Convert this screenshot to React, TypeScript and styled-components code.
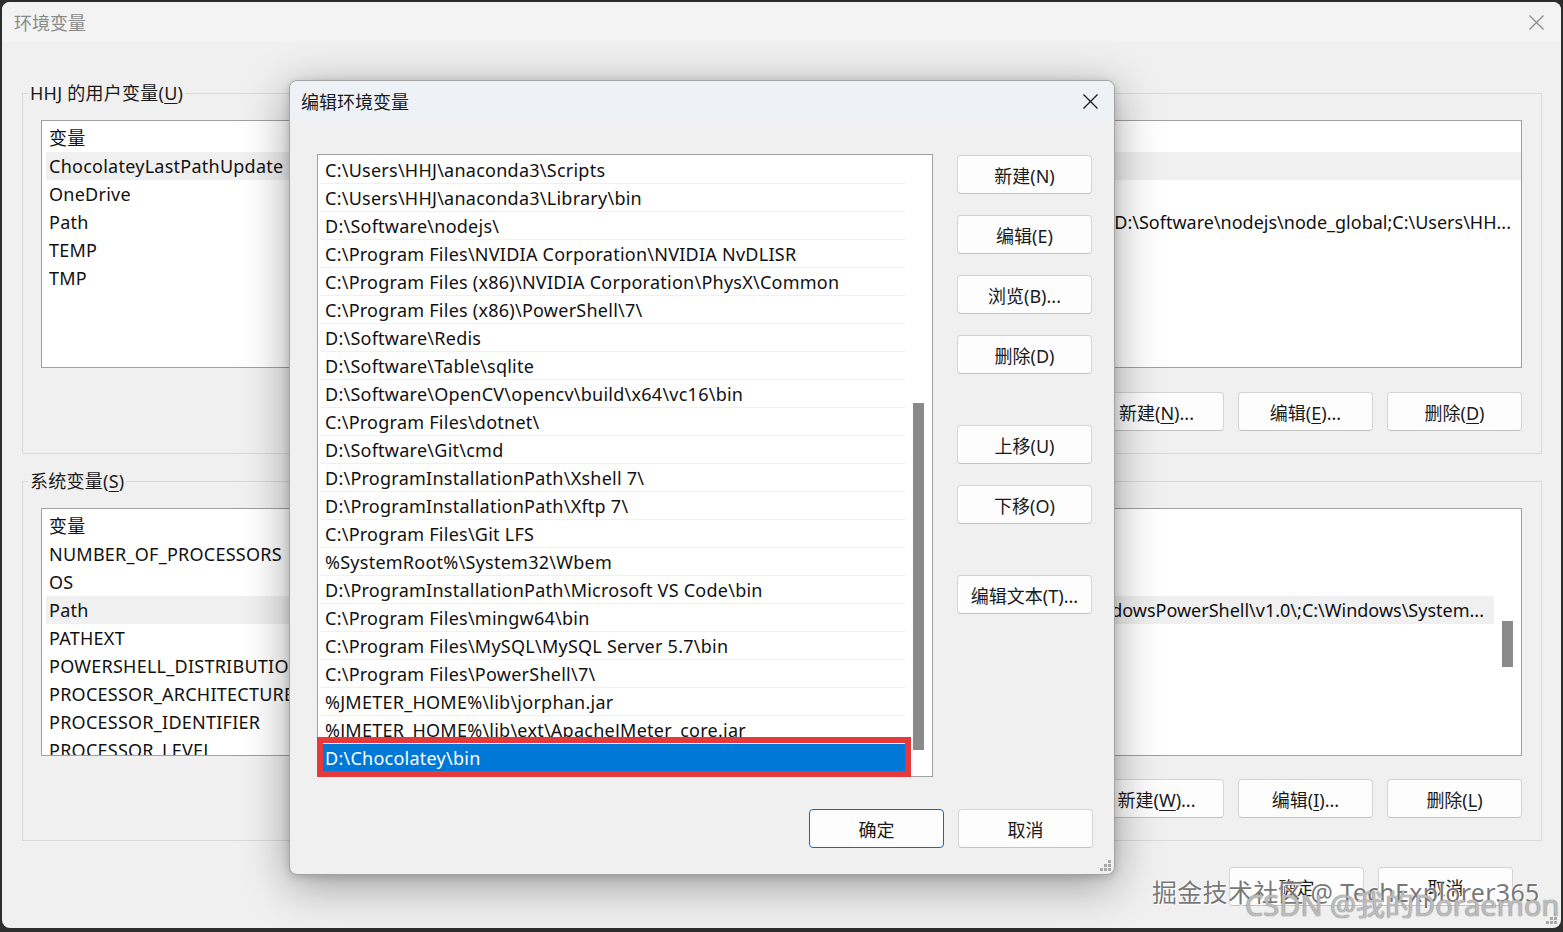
import React from 'react'
import styled, { createGlobalStyle } from 'styled-components'

const GlobalStyle = createGlobalStyle`
  * { box-sizing: border-box; }
  html, body { margin: 0; padding: 0; }
  body {
    background: #2d2d2d;
    font-family: "Noto Sans", "Noto Sans CJK SC", sans-serif;
    font-size: 18px;
    letter-spacing: 0.25px;
    color: #000;
    overflow: hidden;
  }
`

type Variable = { name: string; value: string; hover?: boolean; tail?: boolean }

const userVars: Variable[] = [
  { name: 'ChocolateyLastPathUpdate', value: '133530264858426381', hover: true },
  { name: 'OneDrive', value: 'C:\\Users\\HHJ\\OneDrive' },
  {
    name: 'Path',
    value:
      'C:\\Users\\HHJ\\AppData\\Local\\Microsoft\\WindowsApps;C:\\Users\\HHJ\\AppData\\Local\\Programs\\Microsoft VS Code\\bin;D:\\Software\\nodejs\\node_global;C:\\Users\\HH...',
    tail: true,
  },
  { name: 'TEMP', value: '%USERPROFILE%\\AppData\\Local\\Temp' },
  { name: 'TMP', value: '%USERPROFILE%\\AppData\\Local\\Temp' },
]

const systemVars: Variable[] = [
  { name: 'NUMBER_OF_PROCESSORS', value: '16' },
  { name: 'OS', value: 'Windows_NT' },
  {
    name: 'Path',
    value:
      'C:\\Windows\\system32;C:\\Windows;C:\\Windows\\System32\\Wbem;C:\\Windows\\System32\\WindowsPowerShell\\v1.0\\;C:\\Windows\\System...',
    hover: true,
    tail: true,
  },
  { name: 'PATHEXT', value: '.COM;.EXE;.BAT;.CMD;.VBS;.VBE;.JS;.JSE;.WSF;.WSH;.MSC' },
  { name: 'POWERSHELL_DISTRIBUTION_CHANNEL', value: 'MSI:Windows 10 Pro' },
  { name: 'PROCESSOR_ARCHITECTURE', value: 'AMD64' },
  { name: 'PROCESSOR_IDENTIFIER', value: 'Intel64 Family 6 Model 154 Stepping 3, GenuineIntel' },
  { name: 'PROCESSOR_LEVEL', value: '6' },
]

const paths = [
  'C:\\Users\\HHJ\\anaconda3\\Scripts',
  'C:\\Users\\HHJ\\anaconda3\\Library\\bin',
  'D:\\Software\\nodejs\\',
  'C:\\Program Files\\NVIDIA Corporation\\NVIDIA NvDLISR',
  'C:\\Program Files (x86)\\NVIDIA Corporation\\PhysX\\Common',
  'C:\\Program Files (x86)\\PowerShell\\7\\',
  'D:\\Software\\Redis',
  'D:\\Software\\Table\\sqlite',
  'D:\\Software\\OpenCV\\opencv\\build\\x64\\vc16\\bin',
  'C:\\Program Files\\dotnet\\',
  'D:\\Software\\Git\\cmd',
  'D:\\ProgramInstallationPath\\Xshell 7\\',
  'D:\\ProgramInstallationPath\\Xftp 7\\',
  'C:\\Program Files\\Git LFS',
  '%SystemRoot%\\System32\\Wbem',
  'D:\\ProgramInstallationPath\\Microsoft VS Code\\bin',
  'C:\\Program Files\\mingw64\\bin',
  'C:\\Program Files\\MySQL\\MySQL Server 5.7\\bin',
  'C:\\Program Files\\PowerShell\\7\\',
  '%JMETER_HOME%\\lib\\jorphan.jar',
  '%JMETER_HOME%\\lib\\ext\\ApacheJMeter_core.jar',
  'D:\\Chocolatey\\bin',
]
const selectedPath = paths.length - 1

/** icons */
const CloseIcon = ({ color }: { color: string }) => (
  <svg width="15" height="15" viewBox="0 0 15 15">
    <path d="M0.5 0.5L14.5 14.5M14.5 0.5L0.5 14.5" stroke={color} strokeWidth="1.3" fill="none" />
  </svg>
)

const GripIcon = () => (
  <svg width="11" height="11" viewBox="0 0 11 11">
    {[
      [8, 0],
      [8, 4],
      [4, 4],
      [8, 8],
      [4, 8],
      [0, 8],
    ].map(([x, y]) => (
      <rect key={`${x}-${y}`} x={x} y={y} width="3" height="3" fill="#a8a8a8" />
    ))}
  </svg>
)

const Screen = styled.div`
  position: relative;
  width: 1563px;
  height: 932px;
  padding: 2px 2px 4px 2px;
`

const Window = styled.div`
  position: relative;
  height: 100%;
  display: flex;
  flex-direction: column;
  background: #f0f0f0;
  border-radius: 8px;
`

const TitleBar = styled.div<{ $tint: string }>`
  height: 40px;
  flex: none;
  display: flex;
  align-items: center;
  justify-content: space-between;
  padding-left: ${(p) => (p.$tint === 'dialog' ? 11 : 12)}px;
  background: ${(p) => (p.$tint === 'dialog' ? '#eef2f6' : '#f3f3f3')};
  border-radius: 8px 8px 0 0;
`

const Title = styled.span<{ $inactive?: boolean }>`
  font-size: 18px;
  letter-spacing: 0;
  color: ${(p) => (p.$inactive ? '#8a8a8a' : '#1a1a1a')};
`

const CloseButton = styled.div<{ $width: number }>`
  width: ${(p) => p.$width}px;
  height: 40px;
  display: flex;
  align-items: center;
  justify-content: center;
`

const Content = styled.div`
  flex: 1;
  display: flex;
  flex-direction: column;
  padding: 0 19px 0 20px;
`

const Group = styled.fieldset<{ $gap: number }>`
  margin: ${(p) => p.$gap}px 0 0;
  padding: 0;
  border: 1px solid #d9d9d9;
  min-inline-size: 0;
`

const Legend = styled.legend`
  margin-left: 5px;
  padding: 0 2px;
  line-height: 24px;
  color: #1a1a1a;
`

const GroupBody = styled.div`
  display: flex;
  flex-direction: column;
  padding: 15px 19px 22px 18px;
`

const Key = styled.span`
  text-decoration: underline;
  text-decoration-thickness: 1px;
  text-underline-offset: 3px;
`

const ListBox = styled.div`
  height: 248px;
  display: flex;
  background: #fff;
  border: 1px solid #a0a0a0;
  overflow: hidden;
`

const ListColumn = styled.div`
  flex: 1;
  min-width: 0;
  display: flex;
  flex-direction: column;
  padding-left: 4px;
`

const ListRow = styled.div<{ $header?: boolean; $hover?: boolean }>`
  flex: none;
  display: flex;
  align-items: center;
  height: ${(p) => (p.$header ? 31 : 28)}px;
  background: ${(p) => (p.$hover ? '#f0f0f0' : 'transparent')};
  color: #111;
`

const NameCell = styled.div`
  width: 262px;
  flex: none;
  padding-left: 3px;
  white-space: nowrap;
  overflow: hidden;
  text-overflow: ellipsis;
`

const ValueCell = styled.div<{ $tail?: boolean }>`
  flex: 1;
  min-width: 0;
  display: flex;
  justify-content: ${(p) => (p.$tail ? 'flex-end' : 'flex-start')};
  padding: 0 10px 0 8px;
  overflow: hidden;
  white-space: nowrap;
  letter-spacing: 0;

  span {
    flex: none;
  }
`

const ScrollTrack = styled.div`
  width: 27px;
  flex: none;
  display: flex;
  align-items: flex-start;
  padding-left: 8px;
  background: #fff;
`

const ScrollThumb = styled.div<{ $offset: number; $size: number }>`
  width: 11px;
  height: ${(p) => p.$size}px;
  margin-top: ${(p) => p.$offset}px;
  background: #8a8a8a;
`

const ButtonRow = styled.div<{ $top: number; $right?: number }>`
  display: flex;
  justify-content: flex-end;
  gap: 14px;
  margin-top: ${(p) => p.$top}px;
  padding-right: ${(p) => p.$right ?? 0}px;
`

const Button = styled.button<{ $primary?: boolean; $push?: boolean }>`
  width: 135px;
  height: 39px;
  flex: none;
  display: flex;
  align-items: center;
  justify-content: center;
  margin-top: ${(p) => (p.$push ? 30 : 0)}px;
  padding: 0;
  font: inherit;
  font-size: 18px;
  letter-spacing: 0;
  color: #1a1a1a;
  background: #fdfdfd;
  border: 1px solid ${(p) => (p.$primary ? '#0f6cbd' : '#d4d4d4')};
  border-bottom-color: ${(p) => (p.$primary ? '#0f6cbd' : '#c2c2c2')};
  border-radius: 4px;
`

const Dialog = styled.div`
  position: absolute;
  left: 287px;
  top: 78px;
  width: 826px;
  height: 795px;
  display: flex;
  flex-direction: column;
  background: #f0f0f0;
  border: 1px solid #a3a3a3;
  border-radius: 8px;
  box-shadow: 0 10px 46px rgba(0, 0, 0, 0.36), 0 2px 8px rgba(0, 0, 0, 0.16);
`

const DialogBody = styled.div`
  display: flex;
  padding: 33px 0 0 27px;
`

const PathList = styled.div`
  position: relative;
  width: 616px;
  height: 623px;
  flex: none;
  display: flex;
  background: #fff;
  border: 1px solid #a0a0a0;
`

const PathRows = styled.div`
  flex: 1;
  min-width: 0;
  display: flex;
  flex-direction: column;
  padding: 1px 0 0 2px;
  overflow: hidden;
`

const PathRow = styled.div<{ $selected?: boolean }>`
  flex: none;
  height: 28px;
  line-height: 27px;
  padding: 1px 0 0 5px;
  white-space: nowrap;
  border-bottom: 1px solid ${(p) => (p.$selected ? '#0078d7' : '#f0f0f0')};
  background: ${(p) => (p.$selected ? '#0078d7' : 'transparent')};
  color: ${(p) => (p.$selected ? '#fff' : '#111')};
`

const Annotation = styled.div`
  position: absolute;
  left: -1px;
  top: 582px;
  width: 594px;
  height: 40px;
  border: 6px solid #e5393b;
  pointer-events: none;
`

const SideButtons = styled.div`
  display: flex;
  flex-direction: column;
  gap: 21px;
  margin-left: 24px;
  padding-top: 1px;
`

const Grip = styled.div<{ $inset: number }>`
  position: absolute;
  right: ${(p) => p.$inset}px;
  bottom: ${(p) => p.$inset}px;
  display: flex;
`

const Watermark = styled.div<{ $kind: 'juejin' | 'csdn' }>`
  position: absolute;
  white-space: nowrap;
  pointer-events: none;
  letter-spacing: ${(p) => (p.$kind === 'juejin' ? 0.3 : 0)}px;
  left: ${(p) => (p.$kind === 'juejin' ? 1152 : 1245)}px;
  top: ${(p) => (p.$kind === 'juejin' ? 876 : 886)}px;
  font-size: ${(p) => (p.$kind === 'juejin' ? 25 : 29)}px;
  line-height: ${(p) => (p.$kind === 'juejin' ? 32 : 38)}px;
  color: ${(p) => (p.$kind === 'juejin' ? 'rgba(95, 95, 95, 0.85)' : 'rgba(255, 255, 255, 0.55)')};
  text-shadow: ${(p) =>
    p.$kind === 'juejin'
      ? '0 0 2px #fff, 0 0 2px #fff, 1px 1px 1px #fff'
      : '0 0 1px rgba(110,110,110,0.9), 0 0 1px rgba(110,110,110,0.9)'};
`

const VariableList = ({ vars, scroll }: { vars: Variable[]; scroll?: { offset: number; size: number } }) => (
  <ListBox>
    <ListColumn>
      <ListRow $header>
        <NameCell>变量</NameCell>
        <ValueCell>
          <span>值</span>
        </ValueCell>
      </ListRow>
      {vars.map((v) => (
        <ListRow key={v.name} $hover={v.hover}>
          <NameCell>{v.name}</NameCell>
          <ValueCell $tail={v.tail}>
            <span>{v.value}</span>
          </ValueCell>
        </ListRow>
      ))}
    </ListColumn>
    {scroll && (
      <ScrollTrack>
        <ScrollThumb $offset={scroll.offset} $size={scroll.size} />
      </ScrollTrack>
    )}
  </ListBox>
)

const keyLabel = (pre: string, key: string, post: string) => (
  <span>
    {pre}
    <Key>{key}</Key>
    {post}
  </span>
)

const EditDialog = () => (
  <Dialog>
    <TitleBar $tint="dialog">
      <Title>编辑环境变量</Title>
      <CloseButton $width={48}>
        <CloseIcon color="#1a1a1a" />
      </CloseButton>
    </TitleBar>
    <DialogBody>
      <PathList>
        <PathRows>
          {paths.map((p, i) => (
            <PathRow key={p} $selected={i === selectedPath}>
              {p}
            </PathRow>
          ))}
        </PathRows>
        <ScrollTrack>
          <ScrollThumb $offset={248} $size={347} />
        </ScrollTrack>
        <Annotation />
      </PathList>
      <SideButtons>
        <Button>新建(N)</Button>
        <Button>编辑(E)</Button>
        <Button>浏览(B)...</Button>
        <Button>删除(D)</Button>
        <Button $push>上移(U)</Button>
        <Button>下移(O)</Button>
        <Button $push>编辑文本(T)...</Button>
      </SideButtons>
    </DialogBody>
    <ButtonRow $top={32} $right={21}>
      <Button $primary>确定</Button>
      <Button>取消</Button>
    </ButtonRow>
    <Grip $inset={3}>
      <GripIcon />
    </Grip>
  </Dialog>
)

export default function App() {
  return (
    <>
      <GlobalStyle />
      <Screen>
        <Window>
          <TitleBar $tint="window">
            <Title $inactive>环境变量</Title>
            <CloseButton $width={49}>
              <CloseIcon color="#8c8c8c" />
            </CloseButton>
          </TitleBar>
          <Content>
            <Group $gap={39}>
              <Legend>
                HHJ 的用户变量(<Key>U</Key>)
              </Legend>
              <GroupBody>
                <VariableList vars={userVars} />
                <ButtonRow $top={24}>
                  <Button>{keyLabel('新建(', 'N', ')...')}</Button>
                  <Button>{keyLabel('编辑(', 'E', ')...')}</Button>
                  <Button>{keyLabel('删除(', 'D', ')')}</Button>
                </ButtonRow>
              </GroupBody>
            </Group>
            <Group $gap={15}>
              <Legend>
                系统变量(<Key>S</Key>)
              </Legend>
              <GroupBody>
                <VariableList vars={systemVars} scroll={{ offset: 112, size: 46 }} />
                <ButtonRow $top={23}>
                  <Button>{keyLabel('新建(', 'W', ')...')}</Button>
                  <Button>{keyLabel('编辑(', 'I', ')...')}</Button>
                  <Button>{keyLabel('删除(', 'L', ')')}</Button>
                </ButtonRow>
              </GroupBody>
            </Group>
            <ButtonRow $top={26} $right={29}>
              <Button>确定</Button>
              <Button>取消</Button>
            </ButtonRow>
          </Content>
          <Grip $inset={4}>
            <GripIcon />
          </Grip>
          <EditDialog />
        </Window>
        <Watermark $kind="juejin">掘金技术社区 @ TechExplorer365</Watermark>
        <Watermark $kind="csdn">CSDN @我的Doraemon</Watermark>
      </Screen>
    </>
  )
}
